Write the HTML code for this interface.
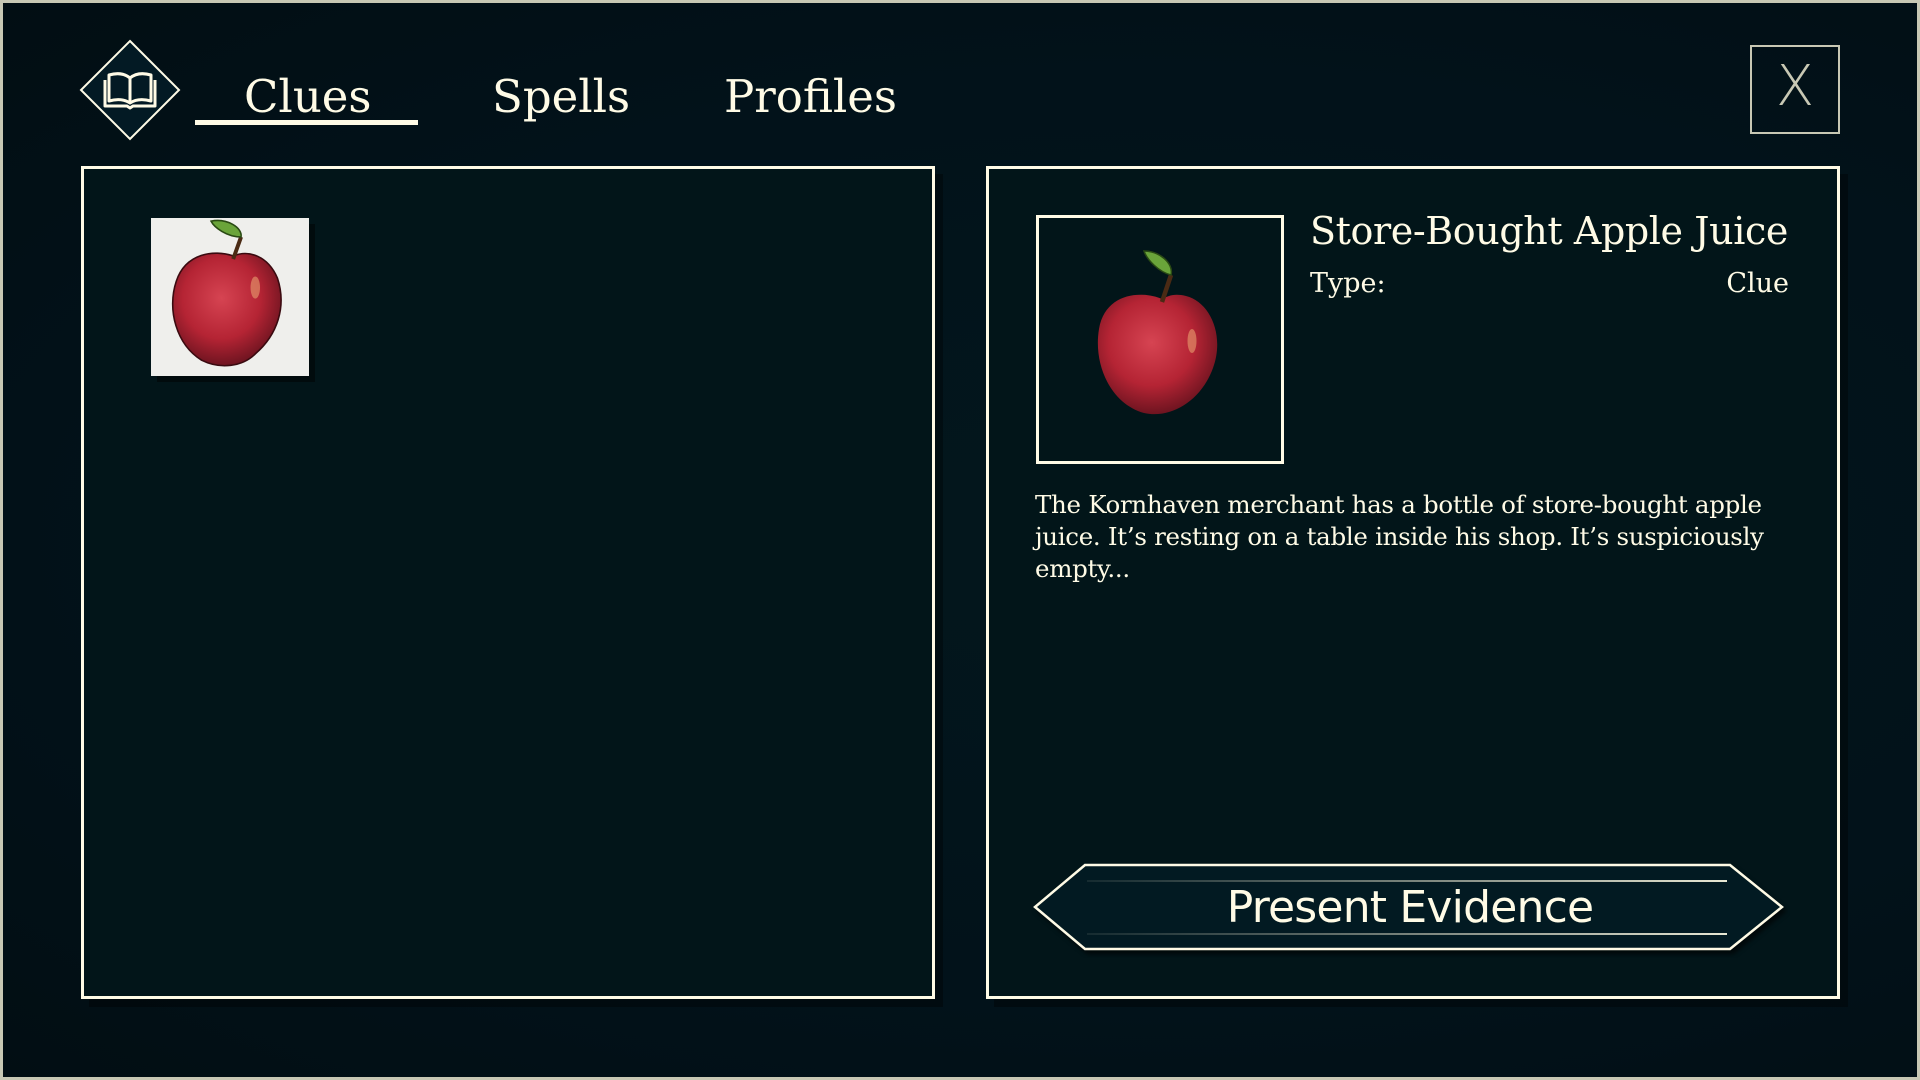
<!DOCTYPE html>
<html><head><meta charset="utf-8"><style>
*{margin:0;padding:0;box-sizing:border-box}
body{width:1920px;height:1080px;background:#c8c8b4;overflow:hidden;position:relative;font-family:"DejaVu Serif","Liberation Serif",serif;color:#fffbe6}
#bg{position:absolute;left:3px;top:3px;width:1914px;height:1074px;background:radial-gradient(ellipse at 60% 50%,#03171d 0%,#02121a 60%,#020e13 100%)}
.abs{position:absolute}
.tab{position:absolute;top:67px;font-size:45px;line-height:60px;white-space:nowrap}
.panel{position:absolute;border:3px solid #fffbe6;background:#021519;box-shadow:8px 8px 0 rgba(0,0,0,.35)}
</style></head><body>
<div id="bg"></div>
<svg class="abs" style="left:78px;top:38px" width="104" height="104" viewBox="0 0 104 104">
<polygon points="52,3 101,52 52,101 3,52" fill="#031a24" stroke="#fffbe6" stroke-width="2"/>
<g fill="none" stroke="#fffbe6" stroke-width="3" stroke-linejoin="round">
<path d="M52 40 C46 35 38 35 31 37 L31 63 C38 61 46 61 52 65 C58 61 66 61 73 63 L73 37 C66 35 58 35 52 40 Z"/>
<path d="M52 40 L52 65"/>
<path d="M27 42 L27 68 L49 68 L52 70 L55 68 L77 68 L77 42"/>
</g></svg>
<div class="tab" style="left:244px">Clues</div>
<div class="abs" style="left:195px;top:120px;width:223px;height:5px;background:#fffbe6"></div>
<div class="tab" style="left:492px">Spells</div>
<div class="tab" style="left:724px">Profiles</div>
<div class="abs" style="left:1750px;top:45px;width:90px;height:89px;border:2px solid #c8c8b4"></div>
<div class="abs" style="left:1750px;top:54px;width:90px;text-align:center;font-family:'DejaVu Sans',sans-serif;font-size:56px;font-weight:200;color:#c8c8b4">X</div>

<div class="panel" style="left:81px;top:166px;width:854px;height:833px"></div>
<div class="abs" style="left:151px;top:218px;width:158px;height:158px;background:#efefec;box-shadow:6px 6px 0 rgba(0,0,0,.45)">
<svg width="158" height="158" viewBox="0 0 100 100"><defs><radialGradient id="a" cx=".45" cy=".4" r=".6"><stop offset="0" stop-color="#d64452"/><stop offset=".6" stop-color="#b52434"/><stop offset="1" stop-color="#6e1420"/></radialGradient></defs>
<path d="M52 24 C40 20 22 22 16 40 C10 58 16 80 32 90 C44 96 58 94 66 86 C80 74 86 56 80 38 C74 24 62 20 52 24Z" fill="url(#a)" stroke="#3a0a10" stroke-width="1"/>
<path d="M52 26 L57 12" stroke="#4a2a14" stroke-width="2.5"/>
<path d="M57 12 C48 12 40 6 38 2 C48 0 58 6 57 12Z" fill="#6aa43a" stroke="#2a4a14" stroke-width="1"/>
<ellipse cx="66" cy="44" rx="3" ry="7" fill="#e8a070" opacity=".6"/></svg></div>

<div class="panel" style="left:986px;top:166px;width:854px;height:833px"></div>
<div class="abs" style="left:1036px;top:215px;width:248px;height:249px;border:3px solid #fffbe6;background:#021519">
<svg class="abs" style="left:45px;top:30px" width="150" height="180" viewBox="0 0 100 120"><defs><radialGradient id="b" cx=".45" cy=".4" r=".6"><stop offset="0" stop-color="#d64452"/><stop offset=".6" stop-color="#b52434"/><stop offset="1" stop-color="#6e1420"/></radialGradient></defs>
<path d="M52 34 C38 28 14 30 10 54 C6 78 18 104 40 110 C58 114 78 102 86 80 C94 58 84 36 68 32 C60 30 56 32 52 34Z" fill="url(#b)"/>
<path d="M52 36 L58 18" stroke="#4a2a14" stroke-width="3"/>
<path d="M58 18 C50 16 42 8 40 2 C50 2 60 10 58 18Z" fill="#6aa43a" stroke="#2a4a14" stroke-width="1"/>
<ellipse cx="72" cy="62" rx="3" ry="8" fill="#e8a070" opacity=".6"/></svg></div>
<div class="abs" style="left:1310px;top:206px;font-size:38px;line-height:50px;white-space:nowrap;letter-spacing:-0.4px">Store-Bought Apple Juice</div>
<div class="abs" style="left:1310px;top:268px;font-size:27px">Type:</div>
<div class="abs" style="left:1600px;top:268px;width:189px;text-align:right;font-size:27px">Clue</div>
<div class="abs" style="left:1035px;top:489px;width:770px;font-size:24.5px;line-height:32px;letter-spacing:-0.3px">The Kornhaven merchant has a bottle of store-bought apple juice. It’s resting on a table inside his shop. It’s suspiciously empty...</div>

<svg class="abs" style="left:1030px;top:858px" width="760" height="100" viewBox="0 0 760 100">
<polygon points="55,7 700,7 752,49 700,91 55,91 5,49" fill="#021a22" stroke="#fffbe6" stroke-width="2.5" style="filter:drop-shadow(3px 4px 2px rgba(0,0,0,.6))"/>
<defs><linearGradient id="l"><stop offset="0" stop-color="#c8c8b4" stop-opacity=".1"/><stop offset="1" stop-color="#e8e8d4"/></linearGradient></defs>
<rect x="57" y="22" width="640" height="2" fill="url(#l)"/>
<rect x="57" y="75" width="640" height="2" fill="url(#l)"/>
</svg>
<div class="abs" style="left:1035px;top:880px;width:750px;text-align:center;font-family:'DejaVu Sans','Liberation Sans',sans-serif;font-size:44px;line-height:56px;letter-spacing:-0.8px">Present Evidence</div>
</body></html>
